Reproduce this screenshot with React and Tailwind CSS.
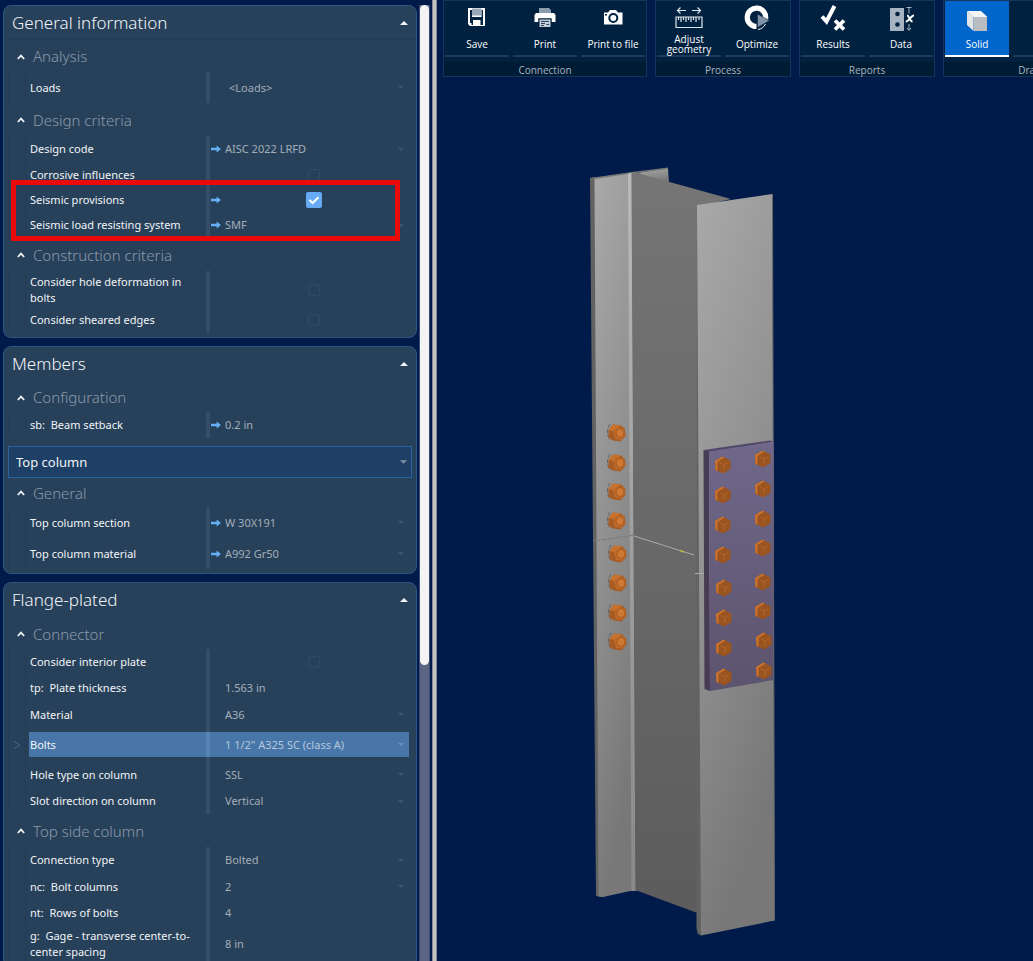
import { useId } from 'react';

const rowHeights = {
  sm: 'h-[25px]',
  md: 'h-[26px]',
  lg: 'h-[31px]',
  xl: 'h-[37px]',
};

function Triangle({ up, className }) {
  return (
    <svg viewBox="0 0 8 4" className={className} fill="currentColor" aria-hidden="true">
      <path d={up ? 'M0 4L4 0L8 4Z' : 'M0 0L4 4L8 0Z'} />
    </svg>
  );
}

function ModifiedArrow() {
  return (
    <svg viewBox="0 0 10 8" className="h-2 w-[10px]" fill="#66aef5" aria-hidden="true">
      <path d="M0 2.8H5.6V0.4L10 4L5.6 7.6V5.2H0Z" />
    </svg>
  );
}

function Row({ label, value, type = 'text', size = 'md', modified, checked, selected, indent, className = '' }) {
  const id = useId();
  const text = selected ? 'text-[#b3c8df]' : 'text-[#a3aeb9]';
  return (
    <div className={`flex ${rowHeights[size]}`}>
      <div className="flex w-[18px] shrink-0 items-center justify-center border-x border-[#243c54] text-[#4a6480]">
        {selected && (
          <svg viewBox="0 0 8 8" className="h-2 w-2" fill="none" stroke="currentColor" aria-hidden="true">
            <path d="M1 0.5L7 4L1 7.5" />
          </svg>
        )}
      </div>
      <div className={`ml-[3px] flex min-w-0 flex-1 ${selected ? 'bg-[#4876a8]' : ''}`}>
        <label htmlFor={id} className={`flex w-[177px] shrink-0 items-center whitespace-pre-wrap pl-px text-[#f1f4f7] ${className}`}>
          {label}
        </label>
        <div className={`w-1 shrink-0 ${selected ? 'bg-[#5583b2]' : 'bg-[#344d68]'}`} />
        <div className={`relative flex min-w-0 flex-1 items-center ${className}`}>
          <span className="flex w-[15px] shrink-0 items-center pl-px">{modified && <ModifiedArrow />}</span>
          {type === 'check' && (
            <span className="flex flex-1 items-center pl-[81px]">
              <span className="relative flex h-4 w-4 items-center justify-center">
                <input
                  id={id}
                  type="checkbox"
                  defaultChecked={checked}
                  className="m-0 h-3 w-3 appearance-none rounded-xs border border-[#304b69] checked:h-4 checked:w-4 checked:border-0 checked:bg-[#66aaf4]"
                />
                {checked && (
                  <svg viewBox="0 0 16 16" className="pointer-events-none absolute inset-0" fill="none" stroke="#fff" strokeWidth="2" aria-hidden="true">
                    <path d="M3.5 8L6.6 11L12.5 5.2" />
                  </svg>
                )}
              </span>
            </span>
          )}
          {type === 'text' && (
            <input id={id} defaultValue={value} className={`w-full min-w-0 bg-transparent outline-none ${text}`} />
          )}
          {type === 'select' && (
            <>
              <select id={id} className={`w-full min-w-0 appearance-none bg-transparent outline-none ${indent ? 'pl-1' : ''} ${text}`}>
                <option>{value}</option>
              </select>
              <Triangle className={`pointer-events-none absolute right-[5px] h-[3px] w-[6px] ${selected ? 'text-[#6590bf]' : 'text-[#3d5773]'}`} />
            </>
          )}
        </div>
      </div>
    </div>
  );
}

function Section({ title, children, className = 'h-8' }) {
  return (
    <section>
      <h3 className={`flex items-center ${className}`}>
        <button className="flex items-center gap-2 pl-[13px] text-[15px] leading-5 font-light text-[#8b9aaa]">
          <svg viewBox="0 0 8 6" className="mt-px h-[6px] w-2" fill="none" stroke="#f1f4f7" strokeWidth="1.7" aria-hidden="true">
            <path d="M0.8 5L4 1.6L7.2 5" />
          </svg>
          {title}
        </button>
      </h3>
      <div className="mr-[7px] ml-1">{children}</div>
    </section>
  );
}

function Panel({ title, line, children }) {
  return (
    <section className="shrink-0 rounded-lg border border-[#2c5685] bg-[#28415a] pb-1">
      <h2 className={`flex items-center border-b ${line ? 'h-[34px] border-[#243b54]' : 'h-[35px] border-transparent'}`}>
        <button className="flex w-full items-center justify-between pr-2 pl-2 text-[17px] leading-6 font-light text-[#f1f4f7]">
          {title}
          <Triangle up className="h-1 w-2" />
        </button>
      </h2>
      {children}
    </section>
  );
}

function SaveIcon() {
  return (
    <svg viewBox="0 0 24 28" className="h-7 w-6" aria-hidden="true">
      <path fill="#fff" fillRule="evenodd" d="M3 5H20V23H5L3 21ZM5 7V20H6.500V22H8V17H15.500V22H18V7H16.500V14H7V7Z" />
      <path fill="#9aa9b8" d="M7 5.500H16.500V12.500H7Z" />
      <path fill="#fff" d="M9.500 19H11.500V22H9.500Z" />
    </svg>
  );
}

function PrintIcon() {
  return (
    <svg viewBox="0 0 24 28" className="h-7 w-6" aria-hidden="true">
      <path fill="#8b9cad" d="M6 5H16L18 7V10H6Z" />
      <path fill="#fff" d="M3 10H21L22.500 12V19H18.500V15.500H5.500V19H1.500V12Z" />
      <path fill="#001f3d" d="M5.500 15.500H18.500V24.500H5.500Z" />
      <path fill="#c3ced8" d="M6.500 16.500H17.500V24H6.500Z" />
      <path stroke="#29435c" d="M8 18.500H16M8 20.500H12M8 22.500H11M13.500 21.500H16" />
    </svg>
  );
}

function CameraIcon() {
  return (
    <svg viewBox="0 0 24 28" className="h-7 w-6" aria-hidden="true">
      <path fill="#fff" d="M3 9.500H7L9 7H15L17 9.500H21.500V21.500H3Z" />
      <circle cx="12.300" cy="15" r="4" fill="#fff" stroke="#00213f" strokeWidth="2" />
      <path fill="#00213f" d="M4 11H6V12.500H4Z" />
    </svg>
  );
}

function RulerIcon() {
  return (
    <svg viewBox="0 0 28 24" className="h-6 w-7" fill="none" stroke="#dfe6ec" aria-hidden="true">
      <path strokeWidth="1.200" d="M11 5.500H2.500M5.500 2.500L2.500 5.500L5.500 8.500M17 5.500H25.500M22.500 2.500L25.500 5.500L22.500 8.500" />
      <path strokeWidth="1.200" d="M1 12H27V22.500H1Z" />
      <path strokeWidth="1.200" d="M3.500 12V15M6 12V17M8.500 12V15M11 12V17M13.500 12V15M16 12V17M18.500 12V15M21 12V17M24 12V15" />
    </svg>
  );
}

function OptimizeIcon() {
  return (
    <svg viewBox="0 0 26 28" className="h-7 w-[26px]" aria-hidden="true">
      <path fill="none" stroke="#fff" strokeWidth="5.200" d="M12.500 23.500A9.200 9.200 0 1 1 21.500 16" />
      <path fill="none" stroke="#fff" strokeWidth="1" d="M14 26.500C17.500 26 20 24 21.500 21" />
      <path fill="#7f93a8" stroke="#00213f" strokeWidth="0.500" d="M13.500 11L25.500 17.500L13.500 24.500Z" />
    </svg>
  );
}

function ResultsIcon() {
  return (
    <svg viewBox="0 0 26 28" className="h-7 w-[26px]" fill="none" stroke="#fff" aria-hidden="true">
      <path strokeWidth="4" d="M2 13.500L6.500 18.500L14.500 3" />
      <path strokeWidth="3.800" d="M15 17.500L24 26.500M24 17.500L15 26.500" />
    </svg>
  );
}

function DataIcon() {
  return (
    <svg viewBox="0 0 28 28" className="h-7 w-7" aria-hidden="true">
      <path fill="#a5b2bf" d="M3 5H17V28H3Z" />
      <circle cx="10.500" cy="11" r="2.300" fill="#00213f" />
      <circle cx="10.500" cy="21.500" r="2.300" fill="#00213f" />
      <path fill="none" stroke="#a5b2bf" d="M19.500 4.500H24.500M22 5V10.500M22 21V27M20 25L22 27.500L24 25" />
      <path fill="none" stroke="#fff" strokeWidth="2" d="M20 12.500C22.500 12.500 22.500 18.500 25.500 18.500M27 12.500C24.500 12 21.500 19 18.800 18.500" />
    </svg>
  );
}

function SolidIcon() {
  return (
    <svg viewBox="0 0 24 28" className="h-7 w-6" aria-hidden="true">
      <path fill="#f4f4f4" d="M2 8H16L22 13.500V14H8Z" />
      <path fill="#e2e4e6" d="M2 8L8.500 14V28L2 22Z" />
      <path fill="#b9bcc0" d="M8.500 14H22V28H8.500Z" />
    </svg>
  );
}

function Tool({ icon, label, active }) {
  return (
    <button
      className={`flex h-14 w-16 shrink-0 flex-col items-center border-b-2 ${
        active ? 'border-white bg-[#0066cc]' : 'border-[#1c3b5a]'
      }`}
    >
      <span className="flex h-[31px] items-center">{icon}</span>
      <span className="flex h-[23px] w-full items-center justify-center text-[10px] leading-[10px] text-white">{label}</span>
    </button>
  );
}

function Group({ title, children }) {
  return (
    <div className="shrink-0 border border-[#14365a] bg-[#00213f]">
      <div className="flex gap-1 px-px pb-[5px]">{children}</div>
      <div className="flex h-[14px] items-center justify-center bg-[#001c34] pt-[2px] text-[10px] leading-3 text-[#a9b4c0]">{title}</div>
    </div>
  );
}

const nuts = [
  [617, 433], [617, 463], [617, 492], [617, 521],
  [618, 554], [618, 583], [618, 613], [618, 642],
];
const heads = [
  [723, 465], [723, 495], [723, 525], [723, 555],
  [724, 588], [724, 618], [724, 648], [724, 677],
  [763, 459], [763, 489], [763, 519], [763, 548],
  [763, 582], [763, 611], [764, 641], [764, 671],
];

function ColumnModel() {
  return (
    <svg viewBox="437 77 596 884" className="h-full w-full" role="img" aria-label="Flange-plated column splice">
      <defs>
        <linearGradient id="flange" x1="0" y1="0" x2="0.3" y2="1">
          <stop offset="0" stopColor="#a9a9a9" />
          <stop offset="0.5" stopColor="#929292" />
          <stop offset="1" stopColor="#787878" />
        </linearGradient>
        <linearGradient id="web" x1="0" y1="0" x2="0" y2="1">
          <stop offset="0" stopColor="#757575" />
          <stop offset="1" stopColor="#5c5c5c" />
        </linearGradient>
        <linearGradient id="fillet" x1="0" y1="0" x2="0" y2="1">
          <stop offset="0" stopColor="#bababa" />
          <stop offset="0.5" stopColor="#a0a0a0" />
          <stop offset="1" stopColor="#8a8a8a" />
        </linearGradient>
        <linearGradient id="plate" x1="0" y1="0" x2="0" y2="1">
          <stop offset="0" stopColor="#70688a" />
          <stop offset="1" stopColor="#5c536e" />
        </linearGradient>
        <g id="nut">
          <path d="M-7 -9Q-12 -1 -7 7" fill="none" stroke="#555" strokeWidth="0.8" strokeDasharray="4 1.500" />
          <path d="M-8.500 -3L-4 -8.500L4 -7.500L8 -4L8.500 3L3.500 8.500L-4 7.500L-8.500 5Z" fill="#a65b22" />
          <path d="M-8.500 -3L-4 -8.500L4 -7.500L0 -4L-4 -2Z" fill="#c8722d" />
          <path d="M-4 -2L1 -6L7 -5L8.500 2L4 7L-2 6Z" fill="#bd692a" />
          <ellipse cx="3" cy="0" rx="4" ry="4.500" fill="#cf7833" stroke="#a35920" strokeWidth="1" />
        </g>
        <g id="head">
          <path d="M-8 -4L-0.500 -8.500L7.500 -4.500V4L0 8.500L-7.500 5Z" fill="#9a5420" />
          <path d="M-8 -4L-0.500 -8.500L1.500 -7.500L-5.500 -3L-5.500 6L-7.500 5Z" fill="#c9722d" />
          <path d="M1 0V5M1 0L-3.500 -2.500M1 0L5.500 -2.500" fill="none" stroke="#b3652a" strokeWidth="1" />
        </g>
      </defs>
      <path d="M590 178L595 177L603 897L596 896Z" fill="#626262" />
      <path d="M637 173L668 168L669 183L650 179Z" fill="url(#flange)" />
      <path d="M594.500 178L632 172.500L636 891L630 891L603 897L598.500 896.500Z" fill="url(#flange)" />
      <path d="M590 178L632 172L668 167.500V169L632 173.500L595 179Z" fill="#777" />
      <path d="M628 173.500L631.500 173L635.500 891L631.500 891Z" fill="url(#fillet)" />
      <path d="M631.500 173L637 173L731 199L701 206L702 914L696 912.500L638 891H635.500Z" fill="url(#web)" />
      <path d="M697 205L700 205L701 935.500L698 934Q696.500 931 696.500 925Z" fill="#626262" />
      <path d="M697 205L772.500 194L774.500 920.500L701 935.500Z" fill="url(#flange)" />
      <path d="M772.500 194L774.500 920.500" stroke="#666" strokeWidth="1" />
      <path d="M594 541L634 535" stroke="#7c7c7c" strokeWidth="1" strokeDasharray="6 1" />
      <path d="M634 536L694 555M695 573.500H704" stroke="#aaa" strokeWidth="1" fill="none" />
      <path d="M680 550.500L684 552" stroke="#b8b83a" strokeWidth="1.500" />
      <path d="M703.500 450L770 440.500L773.500 442L709 452Z" fill="#51486b" />
      <path d="M703.500 450L709 451.500L710 691L704.500 689Z" fill="#463c54" />
      <path d="M709 451.500L773.500 442V680L710 691Z" fill="url(#plate)" />
      {nuts.map(([x, y]) => (
        <use key={`${x}-${y}`} href="#nut" x={x} y={y} />
      ))}
      {heads.map(([x, y]) => (
        <use key={`${x}-${y}`} href="#head" x={x} y={y} />
      ))}
    </svg>
  );
}

export default function App() {
  return (
    <div className="flex h-screen overflow-hidden bg-[#001b49] font-['Noto_Sans','Open_Sans',sans-serif] text-[11px] leading-4">
      <aside className="flex w-[417px] shrink-0 flex-col gap-2 overflow-hidden pt-[5px] pl-[3px]">
        <Panel title="General information" line>
          <Section title="Analysis">
            <Row label="Loads" value="<Loads>" type="select" size="lg" indent />
          </Section>
          <Section title="Design criteria" className="h-[33px]">
            <Row label="Design code" value="AISC 2022 LRFD" type="select" modified />
            <Row label="Corrosive influences" type="check" size="sm" />
            <div className="relative">
              <Row label="Seismic provisions" type="check" size="sm" modified checked />
              <Row label="Seismic load resisting system" value="SMF" type="select" modified />
              <div className="pointer-events-none absolute -top-[7px] right-[9px] -bottom-[3px] left-[3px] border-[5px] border-[#ea0a0a]" />
            </div>
          </Section>
          <Section title="Construction criteria" className="h-[33px]">
            <Row label="Consider hole deformation in bolts" type="check" size="xl" />
            <Row label="Consider sheared edges" type="check" size="sm" className="pb-px" />
          </Section>
        </Panel>

        <Panel title="Members">
          <Section title="Configuration" className="h-[30px]">
            <Row label="sb:  Beam setback" value="0.2 in" modified />
          </Section>
          <div className="relative mx-1 mt-2 flex h-8 items-center border border-[#2a62a0] bg-[#1e3f66]">
            <select aria-label="Column" className="w-full appearance-none bg-transparent pl-[7px] text-[13px] text-[#f1f4f7] outline-none">
              <option>Top column</option>
            </select>
            <Triangle className="pointer-events-none absolute right-1 h-[4px] w-[7px] text-[#7f92a6]" />
          </div>
          <Section title="General" className="h-[29px]">
            <Row label="Top column section" value="W 30X191" type="select" size="lg" modified />
            <Row label="Top column material" value="A992 Gr50" type="select" size="lg" modified />
          </Section>
        </Panel>

        <Panel title="Flange-plated">
          <Section title="Connector" className="h-[31px]">
            <Row label="Consider interior plate" type="check" size="md" />
            <Row label="tp:  Plate thickness" value="1.563 in" />
            <Row label="Material" value="A36" type="select" size="lg" className="pb-1" />
            <Row label="Bolts" value={'1 1/2" A325 SC (class A)'} type="select" size="sm" selected />
            <Row label="Hole type on column" value="SSL" type="select" size="lg" className="pt-1" />
            <Row label="Slot direction on column" value="Vertical" type="select" />
          </Section>
          <Section title="Top side column" className="h-[33px]">
            <Row label="Connection type" value="Bolted" type="select" />
            <Row label="nc:  Bolt columns" value="2" type="select" className="pt-px" />
            <Row label="nt:  Rows of bolts" value="4" className="pt-px" />
            <Row label="g:  Gage - transverse center-to-center spacing" value="8 in" size="xl" />
          </Section>
        </Panel>
      </aside>

      <div className="mt-[5px] ml-[2px] w-[11px] shrink-0 border-x border-[#3b4c74] bg-[#5a6583]">
        <div className="h-[660px] rounded-full bg-[#f3f3f3]" />
      </div>
      <div className="ml-[2px] w-[5px] shrink-0 border-x border-[#858a94] bg-[#c4c4c4]" />

      <main className="flex min-w-0 flex-1 flex-col overflow-hidden">
        <div className="flex shrink-0 gap-2 overflow-hidden pl-[6px] font-['Open_Sans','Noto_Sans',sans-serif]">
          <Group title="Connection">
            <Tool icon={<SaveIcon />} label="Save" />
            <Tool icon={<PrintIcon />} label="Print" />
            <Tool icon={<CameraIcon />} label="Print to file" />
          </Group>
          <Group title="Process">
            <Tool icon={<RulerIcon />} label="Adjust geometry" />
            <Tool icon={<OptimizeIcon />} label="Optimize" />
          </Group>
          <Group title="Reports">
            <Tool icon={<ResultsIcon />} label="Results" />
            <Tool icon={<DataIcon />} label="Data" />
          </Group>
          <Group title="Draw styles">
            <Tool icon={<SolidIcon />} label="Solid" active />
            <Tool />
            <Tool />
          </Group>
        </div>
        <div className="min-h-0 flex-1">
          <ColumnModel />
        </div>
      </main>
    </div>
  );
}
